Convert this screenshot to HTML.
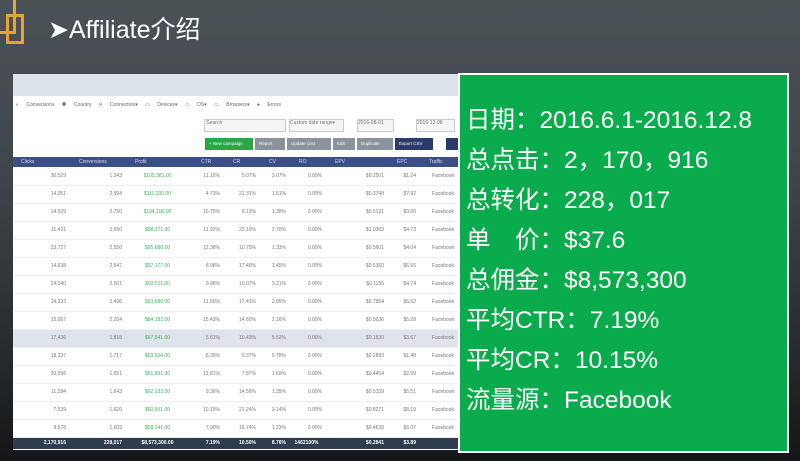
<!DOCTYPE html>
<html><head><meta charset="utf-8"><style>
*{margin:0;padding:0;box-sizing:border-box}
body{width:800px;height:461px;overflow:hidden;position:relative;background:linear-gradient(180deg,#4b5257 0%,#3e4449 40%,#24282b 80%,#141618 100%);font-family:"Liberation Sans","Noto Sans CJK SC",sans-serif}
.logo1{position:absolute;left:-6px;top:-6px;width:22px;height:40px;border:3px solid #e8a52a}
.logo2{position:absolute;left:6px;top:14px;width:18px;height:30px;border:3px solid #e8a52a}
.title{position:absolute;left:48px;top:10px;color:#fff;font-size:25px}
.shot{position:absolute;left:13px;top:74px;width:446px;height:376px;background:#fff;overflow:hidden;font-size:5px;color:#777}
.band{height:22px;background:#dde3ea}
.nav{height:18px;line-height:18px;padding-left:3px;color:#666;word-spacing:6px;white-space:nowrap}
.srch{position:absolute;top:45px;height:13px;border:1px solid #ccc;background:#f4f5f7}
.btn{position:absolute;top:64px;height:12px;line-height:12px;color:#fff;padding:0 4px;font-size:4.5px}
table{position:absolute;top:83px;left:0;width:446px;border-collapse:collapse;table-layout:fixed}
th{background:#3a4f86;color:#dde;height:10px;font-weight:normal;text-align:left;padding-left:8px;overflow:hidden;white-space:nowrap}
td{height:18px;text-align:right;padding-right:5px;border-bottom:1px solid #eceef1;overflow:hidden;white-space:nowrap}
td.g{color:#3cb35a;text-align:center}
tr.hl td{background:#dfe4ec}
tr.ft td{background:#2f3b4e;color:#fff;height:12px;font-weight:bold;border:none}
.green{position:absolute;left:458px;top:73px;width:331px;height:380px;border:2px solid #fff;background:#0aab4c;color:#fff;font-size:24.5px;padding:26px 0 0 6px;line-height:40px;white-space:nowrap}
</style></head><body>
<div class="logo1"></div><div class="logo2"></div>
<div class="title">➤Affiliate介绍</div>
<div class="shot">
<div class="band"></div>
<div class="nav">◐ Conversions ◉ Country ⚲ Connection▾ ▭ Devices▾ ▭ OS▾ ▭ Browsers▾ ● Errors</div>
<div class="srch" style="left:191px;width:82px">&nbsp;Search</div>
<div class="srch" style="left:276px;width:55px">Custom date range▾</div>
<div class="srch" style="left:344px;width:37px">2016-08-01</div>
<div class="srch" style="left:403px;width:39px">2016-12-08</div>
<div class="btn" style="left:192px;width:48px;background:#27a844">+ New campaign</div>
<div class="btn" style="left:242px;width:30px;background:#8a929c">Report</div>
<div class="btn" style="left:274px;width:44px;background:#8a929c">Update cost</div>
<div class="btn" style="left:320px;width:22px;background:#8a929c">Edit</div>
<div class="btn" style="left:344px;width:36px;background:#8a929c">Duplicate</div>
<div class="btn" style="left:382px;width:38px;background:#2a3a6a">Export CSV</div>
<div class="btn" style="left:433px;width:13px;background:#2a3a6a"></div>
<table>
<colgroup><col style="width:58px"><col style="width:56px"><col style="width:66px"><col style="width:32px"><col style="width:36px"><col style="width:30px"><col style="width:36px"><col style="width:62px"><col style="width:32px"><col style="width:38px"></colgroup>
<tr><th>Clicks</th><th>Conversions</th><th>Profit</th><th>CTR</th><th>CR</th><th>CV</th><th>RO</th><th>EPV</th><th>EPC</th><th>Traffic</th></tr>
<tr><td>30,529</td><td>1,343</td><td class="g">$105,381.00</td><td>11.16%</td><td>5.07%</td><td>3.07%</td><td>0.00%</td><td>$0.2501</td><td>$1.24</td><td>Facebook</td></tr>
<tr><td>14,051</td><td>2,994</td><td class="g">$111,200.00</td><td>4.73%</td><td>21.31%</td><td>1.51%</td><td>0.00%</td><td>$0.3748</td><td>$7.92</td><td>Facebook</td></tr>
<tr><td>14,029</td><td>2,750</td><td class="g">$104,100.00</td><td>10.75%</td><td>8.13%</td><td>1.38%</td><td>0.00%</td><td>$0.5121</td><td>$3.00</td><td>Facebook</td></tr>
<tr><td>11,421</td><td>2,650</td><td class="g">$98,371.00</td><td>11.92%</td><td>23.10%</td><td>2.70%</td><td>0.00%</td><td>$1.0303</td><td>$4.73</td><td>Facebook</td></tr>
<tr><td>23,727</td><td>2,550</td><td class="g">$95,680.00</td><td>12.38%</td><td>10.75%</td><td>1.33%</td><td>0.00%</td><td>$0.5601</td><td>$4.04</td><td>Facebook</td></tr>
<tr><td>14,638</td><td>2,547</td><td class="g">$97,177.00</td><td>8.98%</td><td>17.40%</td><td>1.45%</td><td>0.00%</td><td>$0.5360</td><td>$6.65</td><td>Facebook</td></tr>
<tr><td>24,040</td><td>2,501</td><td class="g">$93,511.00</td><td>9.06%</td><td>10.07%</td><td>3.21%</td><td>0.00%</td><td>$0.1155</td><td>$4.74</td><td>Facebook</td></tr>
<tr><td>14,333</td><td>2,496</td><td class="g">$93,680.00</td><td>11.80%</td><td>17.41%</td><td>2.05%</td><td>0.00%</td><td>$0.7954</td><td>$6.52</td><td>Facebook</td></tr>
<tr><td>15,067</td><td>2,204</td><td class="g">$84,182.00</td><td>15.43%</td><td>14.60%</td><td>2.16%</td><td>0.00%</td><td>$0.5036</td><td>$5.28</td><td>Facebook</td></tr>
<tr class="hl"><td>17,436</td><td>1,818</td><td class="g">$67,541.00</td><td>5.61%</td><td>10.43%</td><td>5.52%</td><td>0.00%</td><td>$0.1530</td><td>$3.67</td><td>Facebook</td></tr>
<tr><td>18,337</td><td>1,717</td><td class="g">$63,504.00</td><td>8.35%</td><td>9.37%</td><td>5.78%</td><td>0.00%</td><td>$0.2893</td><td>$1.48</td><td>Facebook</td></tr>
<tr><td>20,098</td><td>1,651</td><td class="g">$61,891.00</td><td>13.81%</td><td>7.87%</td><td>1.69%</td><td>0.00%</td><td>$0.4454</td><td>$2.59</td><td>Facebook</td></tr>
<tr><td>11,284</td><td>1,643</td><td class="g">$62,132.00</td><td>9.36%</td><td>14.56%</td><td>1.35%</td><td>0.00%</td><td>$0.5159</td><td>$5.51</td><td>Facebook</td></tr>
<tr><td>7,539</td><td>1,620</td><td class="g">$60,651.00</td><td>10.15%</td><td>21.24%</td><td>3.14%</td><td>0.00%</td><td>$0.8271</td><td>$8.19</td><td>Facebook</td></tr>
<tr><td>9,578</td><td>1,603</td><td class="g">$58,141.00</td><td>7.90%</td><td>16.74%</td><td>1.23%</td><td>0.00%</td><td>$0.4630</td><td>$6.07</td><td>Facebook</td></tr>
<tr class="ft"><td>2,170,916</td><td>228,017</td><td class="g">$8,573,300.00</td><td>7.19%</td><td>10.50%</td><td>8.76%</td><td class="g">1462100%</td><td>$0.2841</td><td>$3.89</td><td></td></tr>
</table>
</div>
<div class="green">日期：2016.6.1-2016.12.8<br>总点击：2，170，916<br>总转化：228，017<br>单　价：$37.6<br>总佣金：$8,573,300<br>平均CTR：7.19%<br>平均CR：10.15%<br>流量源：Facebook</div>
</body></html>
